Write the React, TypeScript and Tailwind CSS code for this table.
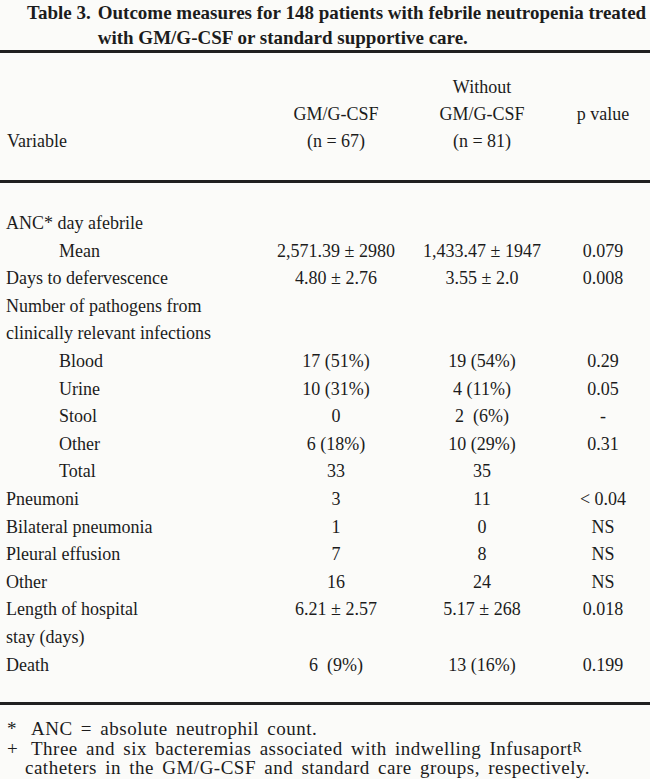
type Row = { label: string; sub?: boolean; a?: string; b?: string; p?: string }

const rows: Row[] = [
  { label: "ANC* day afebrile" },
  { label: "Mean", sub: true, a: "2,571.39 ± 2980", b: "1,433.47 ± 1947", p: "0.079" },
  { label: "Days to defervescence", a: "4.80 ± 2.76", b: "3.55 ± 2.0", p: "0.008" },
  { label: "Number of pathogens from" },
  { label: "clinically relevant infections" },
  { label: "Blood", sub: true, a: "17 (51%)", b: "19 (54%)", p: "0.29" },
  { label: "Urine", sub: true, a: "10 (31%)", b: "4 (11%)", p: "0.05" },
  { label: "Stool", sub: true, a: "0", b: "2\u00a0\u00a0(6%)", p: "-" },
  { label: "Other", sub: true, a: "6 (18%)", b: "10 (29%)", p: "0.31" },
  { label: "Total", sub: true, a: "33", b: "35" },
  { label: "Pneumoni", a: "3", b: "11", p: "< 0.04" },
  { label: "Bilateral pneumonia", a: "1", b: "0", p: "NS" },
  { label: "Pleural effusion", a: "7", b: "8", p: "NS" },
  { label: "Other", a: "16", b: "24", p: "NS" },
  { label: "Length of hospital", a: "6.21 ± 2.57", b: "5.17 ± 268", p: "0.018" },
  { label: "stay (days)" },
  { label: "Death", a: "6\u00a0\u00a0(9%)", b: "13 (16%)", p: "0.199" },
]

const grid = "grid grid-cols-[270px_132px_160px_82px]"

export default function App() {
  return (
    <div className="w-[650px] h-[779px] overflow-hidden bg-[#fbfbf9] text-[#1c1c1c] font-['Liberation_Serif',serif]">
      {/* title */}
      <div className="flex gap-[7px] pl-[27px] pt-0 text-[19px] leading-[25px] font-bold">
        <span className="whitespace-nowrap">Table 3.</span>
        <span>Outcome measures for 148 patients with febrile neutropenia treated<br />with GM/G-CSF or standard supportive care.</span>
      </div>

      <div className="h-[3px] bg-[#202020]" />

      {/* header */}
      <div className={`${grid} pt-[21px] text-[18px] leading-[27px]`}>
        <div />
        <div />
        <div className="text-center">Without</div>
        <div />
        <div />
        <div className="text-center">GM/G-CSF</div>
        <div className="text-center">GM/G-CSF</div>
        <div className="text-center">p value</div>
        <div className="pl-[7px]">Variable</div>
        <div className="text-center">(n = 67)</div>
        <div className="text-center">(n = 81)</div>
        <div />
      </div>

      <div className="h-[3px] bg-[#202020] mt-[25px]" />

      {/* body */}
      <div className="pt-[27px] text-[18px] leading-[27.6px]">
        {rows.map((r, i) => (
          <div key={i} className={grid}>
            <div className={`whitespace-nowrap ${r.sub ? "pl-[59px]" : "pl-[6px]"}`}>{r.label}</div>
            <div className="text-center whitespace-pre">{r.a ?? ""}</div>
            <div className="text-center whitespace-pre">{r.b ?? ""}</div>
            <div className="text-center">{r.p ?? ""}</div>
          </div>
        ))}
      </div>

      <div className="h-[3px] bg-[#202020] mt-[23px]" />

      {/* footnotes */}
      <div className="pt-[14px] text-[19px] leading-[19.5px] tracking-[0.5px] [word-spacing:3px]">
        <div className="flex">
          <span className="w-[31px] pl-[7px]">*</span>
          <span>ANC = absolute neutrophil count.</span>
        </div>
        <div className="flex">
          <span className="w-[31px] pl-[7px]">+</span>
          <span className="whitespace-nowrap">
            Three and six bacteremias associated with indwelling Infusaport
            <sup className="text-[14px] relative -top-[3px]">R</sup>
          </span>
        </div>
        <div className="pl-[25px] whitespace-nowrap">catheters in the GM/G-CSF and standard care groups, respectively.</div>
      </div>
    </div>
  )
}
